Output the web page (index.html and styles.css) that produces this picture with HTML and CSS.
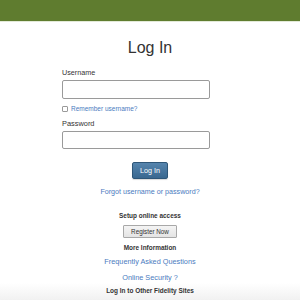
FILE: index.html
```html
<!DOCTYPE html>
<html lang="en">
<head>
<meta charset="utf-8">
<title>Log In</title>
<link rel="stylesheet" href="styles.css">
</head>
<body>
<div class="topbar"></div>
<h1 class="title">Log In</h1>
<form class="form">
  <div class="fields">
    <label class="label" for="user">Username</label>
    <input class="input" id="user" type="text">
    <div class="remember">
      <span class="box"></span>
      <a class="remember-link" href="#">Remember username?</a>
    </div>
    <label class="label label-pw" for="pw">Password</label>
    <input class="input input-pw" id="pw" type="password">
  </div>
  <div class="center">
    <button class="login-btn" type="button">Log In</button>
  </div>
  <div class="center"><a class="link forgot" href="#">Forgot username or password?</a></div>
</form>
<div class="center heading setup">Setup online access</div>
<div class="center"><button class="register-btn" type="button">Register Now</button></div>
<div class="center heading more">More Information</div>
<div class="center"><a class="link faq" href="#">Frequently Asked Questions</a></div>
<div class="center"><a class="link security" href="#">Online Security ?</a></div>
<div class="footer">
  <div class="center heading">Log In to Other Fidelity Sites</div>
</div>
</body>
</html>
```

FILE: styles.css
```css
html, body {
  margin: 0;
  padding: 0;
  background: #fff;
  font-family: "Liberation Sans", Arial, Helvetica, sans-serif;
  color: #333;
  overflow: hidden;
  height: 300px;
}
.topbar {
  height: 21px;
  background: #5f7c2f;
  border-bottom: 1px solid #e3ead8;
}
.title {
  margin: 16px 0 0;
  font-size: 16px;
  line-height: 20px;
  font-weight: normal;
  text-align: center;
  color: #333;
}
.form {
  margin: 0;
}
.fields {
  margin-left: 62px;
  width: 148px;
  display: flex;
  flex-direction: column;
}
.label {
  display: block;
  font-size: 7.2px;
  line-height: 10px;
  margin-top: 10px;
  color: #333;
}
.label-pw {
  margin-top: 5px;
  font-size: 7.4px;
}
.input {
  box-sizing: border-box;
  width: 148px;
  height: 19px;
  margin: 2px 0 0;
  border: 1px solid #9a9a9a;
  border-radius: 2px;
  background: #fff;
  padding: 0 3px;
}
.input-pw {
  height: 18px;
}
.remember {
  display: flex;
  align-items: center;
  height: 10px;
  margin-top: 5px;
}
.box {
  box-sizing: border-box;
  width: 6px;
  height: 6px;
  border: 1px solid #9a9a9a;
  border-radius: 1px;
  background: #fff;
  margin-right: 3px;
}
.remember-link {
  font-size: 6.5px;
  line-height: 10px;
  color: #4a7bc0;
  text-decoration: none;
}
.center {
  display: flex;
  justify-content: center;
}
.login-btn {
  box-sizing: border-box;
  width: 36px;
  height: 17px;
  margin-top: 13px;
  padding: 0;
  border: 1px solid #2e5678;
  border-radius: 2px;
  background: linear-gradient(#5584ad, #3a6890);
  color: #fff;
  font-family: "Liberation Sans", Arial, sans-serif;
  font-size: 7.2px;
  box-shadow: 0 1px 1px rgba(0,0,0,0.15);
}
.link {
  color: #4a7bc0;
  text-decoration: none;
  font-size: 7.3px;
  line-height: 10px;
  display: block;
}
.forgot {
  margin-top: 8px;
  font-size: 7.15px;
}
.heading {
  font-weight: bold;
  font-size: 6.45px;
  line-height: 10px;
  color: #333;
}
.setup {
  margin-top: 14px;
}
.register-btn {
  box-sizing: border-box;
  width: 54px;
  height: 13px;
  margin-top: 4px;
  padding: 0;
  border: 1px solid #a8a8a8;
  border-radius: 1px;
  background: linear-gradient(#f4f4f4, #e4e4e4);
  color: #333;
  font-family: "Liberation Sans", Arial, sans-serif;
  font-size: 6.3px;
}
.more {
  margin-top: 5px;
}
.faq {
  margin-top: 4px;
}
.security {
  margin-top: 6px;
}
.footer {
  padding-top: 3px;
  height: 20px;
  background: linear-gradient(#ffffff, #ececec);
}
```
